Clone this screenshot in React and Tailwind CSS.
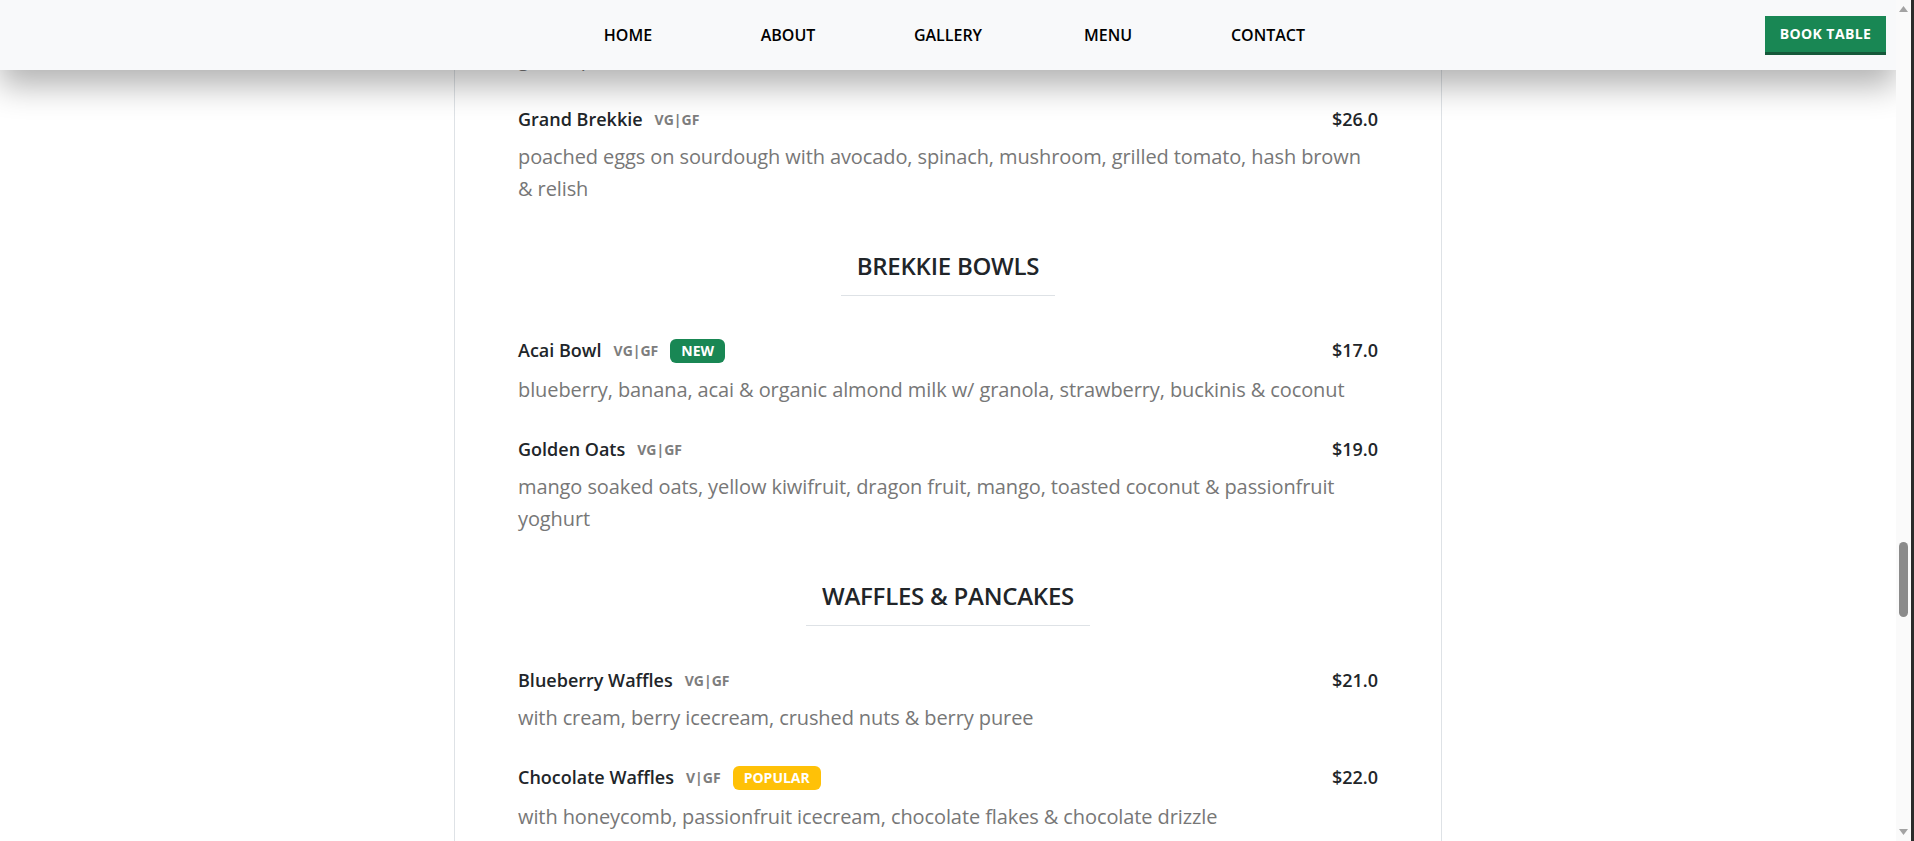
import React from "react";

const navLinks = ["HOME", "ABOUT", "GALLERY", "MENU", "CONTACT"];

const sections = [
  {
    title: null,
    items: [
      {
        name: "Grand Brekkie",
        tags: "VG|GF",
        price: "$26.0",
        desc: "poached eggs on sourdough with avocado, spinach, mushroom, grilled tomato, hash brown & relish",
      },
    ],
  },
  {
    title: "BREKKIE BOWLS",
    items: [
      {
        name: "Acai Bowl",
        tags: "VG|GF",
        badge: "new",
        price: "$17.0",
        desc: "blueberry, banana, acai & organic almond milk w/ granola, strawberry, buckinis & coconut",
      },
      {
        name: "Golden Oats",
        tags: "VG|GF",
        price: "$19.0",
        desc: "mango soaked oats, yellow kiwifruit, dragon fruit, mango, toasted coconut & passionfruit yoghurt",
      },
    ],
  },
  {
    title: "WAFFLES & PANCAKES",
    items: [
      {
        name: "Blueberry Waffles",
        tags: "VG|GF",
        price: "$21.0",
        desc: "with cream, berry icecream, crushed nuts & berry puree",
      },
      {
        name: "Chocolate Waffles",
        tags: "V|GF",
        badge: "popular",
        price: "$22.0",
        desc: "with honeycomb, passionfruit icecream, chocolate flakes & chocolate drizzle",
      },
    ],
  },
];

function Badge({ type }) {
  if (type === "new") {
    return (
      <span className="flex h-6 items-center rounded-md bg-[#198754] px-[11px] text-[14px] font-bold text-white">
        NEW
      </span>
    );
  }
  return (
    <span className="flex h-6 items-center rounded-md bg-[#ffc107] px-[11px] text-[14px] font-bold text-white">
      POPULAR
    </span>
  );
}

function MenuItem({ item }) {
  return (
    <div className="mb-[30px]">
      <div
        className={
          item.badge
            ? "mb-[9.5px] flex items-center justify-between"
            : "mb-2 flex items-center justify-between"
        }
      >
        <div className="flex items-center">
          <span className="text-[18px] leading-[27px] font-semibold text-[#212529]">
            {item.name}
          </span>
          <span className="ml-3 text-[14px] font-bold text-[#7d7d7d]">
            {item.tags}
          </span>
          {item.badge && (
            <span className="ml-3">
              <Badge type={item.badge} />
            </span>
          )}
        </div>
        <span className="text-[18px] leading-[27px] font-semibold text-[#212529]">
          {item.price}
        </span>
      </div>
      <p className="text-[20px] leading-[32px] tracking-[-0.005em] text-[#777777]">
        {item.desc}
      </p>
    </div>
  );
}

function Navbar() {
  return (
    <header className="absolute inset-x-0 top-0 z-10 grid h-[70px] grid-cols-[1fr_auto_1fr] items-center bg-[#f8f9fa] shadow-[0_16px_32px_rgba(0,0,0,0.3)]">
      <div />
      <nav className="flex">
        {navLinks.map((link) => (
          <a
            key={link}
            href="#"
            className="w-[160px] text-center text-[16px] font-semibold text-black"
          >
            {link}
          </a>
        ))}
      </nav>
      <div className="flex justify-end pr-[10px]">
        <button className="h-[39px] w-[121px] border-b-[3px] border-[#15593a] bg-[#198754] text-[14px] font-bold tracking-[0.03em] text-white">
          BOOK TABLE
        </button>
      </div>
    </header>
  );
}

function Scrollbar() {
  return (
    <div className="flex h-full w-[15px] flex-col items-center bg-[#fafafa]">
      <svg width="9" height="6" viewBox="0 0 9 6" className="mt-[6px]">
        <polygon points="4.5,0 9,6 0,6" fill="#a3a3a3" />
      </svg>
      <div className="mt-[530px] h-[75px] w-[9px] rounded-full bg-[#8b8b8b]" />
      <div className="flex-1" />
      <svg width="9" height="6" viewBox="0 0 9 6" className="mb-[6px]">
        <polygon points="0,0 9,0 4.5,6" fill="#a3a3a3" />
      </svg>
    </div>
  );
}

export default function App() {
  return (
    <div className="flex h-[841px] w-full overflow-hidden bg-white font-['Open_Sans',sans-serif]">
      <main className="relative h-full flex-1 overflow-hidden">
        <Navbar />
        <div className="mx-auto h-full w-[988px] border-x border-[#dee2e6] px-[63px] pt-[44px]">
          <p className="mb-8 text-[20px] leading-[30px] text-[#777777]">
            grilled pork
          </p>
          {sections.map((section, i) => (
            <section key={i}>
              {section.title && (
                <div className="flex justify-center">
                  <h2 className="mt-[17px] mb-[41px] border-b border-[#dee2e6] px-4 pb-[14.5px] text-[24px] leading-[1.2] font-semibold tracking-[-0.01em] text-[#212529]">
                    {section.title}
                  </h2>
                </div>
              )}
              {section.items.map((item) => (
                <MenuItem key={item.name} item={item} />
              ))}
            </section>
          ))}
        </div>
      </main>
      <Scrollbar />
      <div className="h-full w-[3px] bg-[#2b2b2b]" />
    </div>
  );
}
